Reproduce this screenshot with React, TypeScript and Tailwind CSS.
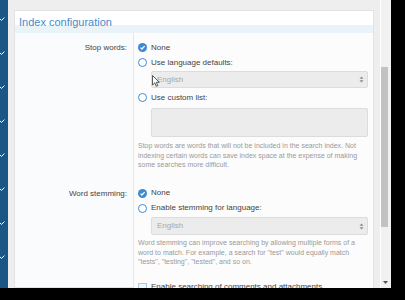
import React from "react";

const font = { fontFamily: '"Liberation Sans", Arial, sans-serif' };

const Checked = () => (
  <span className="w-[9px] h-[9px] rounded-full bg-[#3a8ad6] flex items-center justify-center shrink-0">
    <svg width="7" height="7" viewBox="0 0 10 10">
      <path d="M2.2 5.2 L4.2 7.2 L8 3" fill="none" stroke="white" strokeWidth="1.8" />
    </svg>
  </span>
);

const Empty = () => (
  <span className="w-[9px] h-[9px] rounded-full border-[1.5px] border-[#3b8ed8] bg-white shrink-0" />
);

const Option = ({ checked, label }: { checked?: boolean; label: string }) => (
  <div className="h-[15px] flex items-center gap-[4px] text-[8px] text-[#444]">
    {checked ? <Checked /> : <Empty />}
    <span>{label}</span>
  </div>
);

const Arrows = () => (
  <svg width="5" height="7" viewBox="0 0 5 7">
    <path d="M2.5 0.5 L4.5 2.8 L0.5 2.8 Z" fill="#8a8a8a" />
    <path d="M2.5 6.5 L4.5 4.2 L0.5 4.2 Z" fill="#8a8a8a" />
  </svg>
);

const Select = ({ className, cursor }: { className: string; cursor?: boolean }) => (
  <div
    className={`relative ml-[13px] bg-[#ececec] border border-[#dcdcdc] rounded-[2px] flex items-center justify-between pl-[5px] pr-[3px] text-[8px] text-[#a8a8a8] ${className}`}
  >
    <span>English</span>
    <Arrows />
    {cursor && (
      <svg className="absolute left-[0px] top-[3px]" width="8" height="12" viewBox="0 0 8 12">
        <path d="M0.5 0.5 L0.5 10 L2.8 7.8 L4.3 11.3 L5.8 10.6 L4.3 7.3 L7.3 7.3 Z" fill="white" stroke="#333" strokeWidth="0.8" />
      </svg>
    )}
  </div>
);

const Help = ({ lines }: { lines: string[] }) => (
  <div className="text-[7px] leading-[9.5px] text-[#9a9a9a]">
    {lines.map((l) => (
      <div key={l} className="whitespace-nowrap">
        {l}
      </div>
    ))}
  </div>
);

const Section = ({ label, children }: { label: string; children: React.ReactNode }) => (
  <div className="flex">
    <div className="w-[118px] shrink-0 pt-[7px] pr-[6px] text-right">
      <div className="h-[15px] leading-[15px] text-[8px] text-[#444]">{label}</div>
    </div>
    <div className="flex-1 border-l border-[#e6e6e6] bg-[#fcfcfc] pt-[7px] pb-[9px] pl-[4px] pr-[5px] flex flex-col">
      {children}
    </div>
  </div>
);

export default function App() {
  const checks = [0, 1, 2, 3, 4, 5, 6, 7];
  return (
    <div className="w-[405px] h-[300px] bg-black overflow-hidden" style={font}>
      <div className="w-[391px] h-[288px] bg-[#eeeeee] flex overflow-hidden">
        {/* left nav strip */}
        <div className="w-[8px] shrink-0 bg-[#1b5686] flex flex-col gap-[30px] pt-[17px]">
          {checks.map((c) => (
            <svg key={c} width="5" height="4" viewBox="0 0 5 4">
              <path d="M0 2 L1.5 3.4 L4.4 0.6" fill="none" stroke="white" strokeWidth="1" />
            </svg>
          ))}
        </div>

        {/* panel */}
        <div className="ml-[6px] w-[360px] shrink-0 mt-[10px] bg-[#fafbfc] border border-[#e3e3e3] flex flex-col">
          <div className="h-[22px] leading-[22px] pl-[4px] text-[11px] text-[#3f8dcc] bg-linear-to-b from-white from-63% to-[#e9f3f8] to-63%">
            Index configuration
          </div>

          <Section label="Stop words:">
            <Option checked label="None" />
            <Option label="Use language defaults:" />
            <Select className="mt-[1px] h-[17px]" cursor />
            <div className="mt-[2px]">
              <Option label="Use custom list:" />
            </div>
            <div className="mt-[3px] ml-[13px] h-[29px] bg-[#ececec] border border-[#dcdcdc] rounded-[2px]" />
            <div className="mt-[4px]">
              <Help
                lines={[
                  "Stop words are words that will not be included in the search index. Not",
                  "indexing certain words can save index space at the expense of making",
                  "some searches more difficult.",
                ]}
              />
            </div>
          </Section>

          <Section label="Word stemming:">
            <Option checked label="None" />
            <Option label="Enable stemming for language:" />
            <Select className="mt-[1.5px] h-[18px]" />
            <div className="mt-[3px]">
              <Help
                lines={[
                  "Word stemming can improve searching by allowing multiple forms of a",
                  'word to match. For example, a search for "test" would equally match',
                  '"tests", "testing", "tested", and so on.',
                ]}
              />
            </div>
            <div className="mt-[13px] h-[15px] flex items-center gap-[4px] text-[8px] text-[#444]">
              <span className="w-[9px] h-[9px] border border-[#a9c9e8] bg-[#eef5fb] shrink-0" />
              <span>Enable searching of comments and attachments</span>
            </div>
          </Section>
        </div>

        {/* scrollbar */}
        <div className="ml-[6px] w-[11px] shrink-0 bg-[#f1f1f1] border-l border-white flex flex-col">
          <div className="mt-[67px] ml-[0px] w-[7px] h-[160px] bg-[#c2c2c2]" />
          <div className="mt-auto mb-[4px] flex justify-center pr-[2px]">
            <svg width="5" height="3" viewBox="0 0 5 3">
              <path d="M0 0 L5 0 L2.5 3 Z" fill="#555" />
            </svg>
          </div>
        </div>
      </div>
    </div>
  );
}
